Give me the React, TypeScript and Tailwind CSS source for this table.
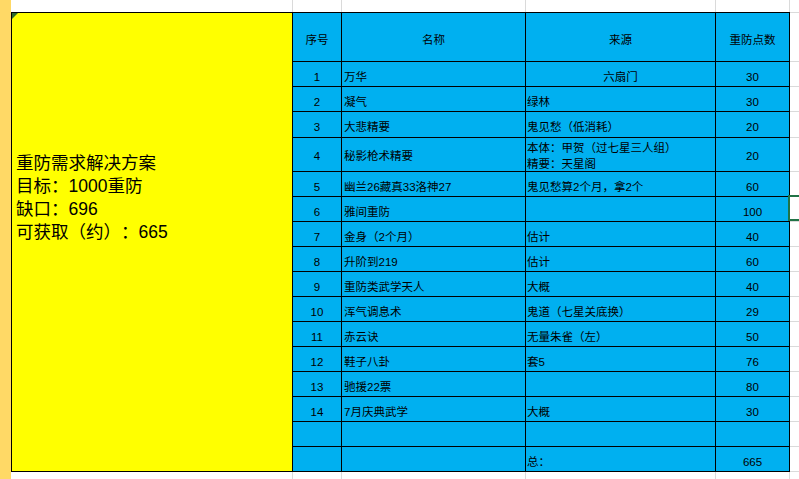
import React from "react";

type Row = { no: string; name: string; src: React.ReactNode; srcCenter?: boolean; pts: string; tall?: boolean };

const rows: Row[] = [
  { no: "1", name: "万华", src: "六扇门", srcCenter: true, pts: "30" },
  { no: "2", name: "凝气", src: "绿林", pts: "30" },
  { no: "3", name: "大悲精要", src: "鬼见愁（低消耗）", pts: "20" },
  {
    no: "4",
    name: "秘影枪术精要",
    src: (
      <div className="leading-[16px]">
        <div>本体：甲贺（过七星三人组）</div>
        <div>精要：天星阁</div>
      </div>
    ),
    pts: "20",
    tall: true,
  },
  { no: "5", name: "幽兰26藏真33洛神27", src: "鬼见愁算2个月，拿2个", pts: "60" },
  { no: "6", name: "雅间重防", src: "", pts: "100" },
  { no: "7", name: "金身（2个月）", src: "估计", pts: "40" },
  { no: "8", name: "升阶到219", src: "估计", pts: "60" },
  { no: "9", name: "重防类武学天人", src: "大概", pts: "40" },
  { no: "10", name: "浑气调息术", src: "鬼道（七星关底换）", pts: "29" },
  { no: "11", name: "赤云诀", src: "无量朱雀（左）", pts: "50" },
  { no: "12", name: "鞋子八卦", src: "套5", pts: "76" },
  { no: "13", name: "驰援22票", src: "", pts: "80" },
  { no: "14", name: "7月庆典武学", src: "大概", pts: "30" },
  { no: "", name: "", src: "", pts: "" },
  { no: "", name: "", src: "总：", pts: "665" },
];

const extraHeights = ["h-[49px]", "h-[25px]", "h-[25px]", "h-[26px]", "h-[34px]"];

function Cell({ children, center, tall, pl }: { children?: React.ReactNode; center?: boolean; tall?: boolean; pl?: string }) {
  return (
    <div
      className={
        "bg-[#00B0F0] flex items-center overflow-hidden whitespace-nowrap " +
        (tall ? "pt-[2px] " : "pt-[5px] ") +
        (center ? "justify-center " : "justify-start ") +
        (pl ?? "")
      }
    >
      {children}
    </div>
  );
}

export default function App() {
  return (
    <div className="w-[799px] h-[479px] bg-white flex overflow-hidden text-black [text-spacing-trim:space-all] font-['Liberation_Sans','Noto_Sans_CJK_SC',sans-serif]">
      {/* left row-header strip */}
      <div className="w-[11px] h-full bg-[#FFD966] shrink-0" />

      {/* main column */}
      <div className="w-[779px] h-full flex flex-col shrink-0">
        <div className="h-[12px] flex shrink-0">
          <div className="w-[282px] border-r border-[#dadada]" />
          <div className="w-[49px] border-r border-[#dadada]" />
          <div className="w-[184px] border-r border-[#dadada]" />
          <div className="w-[190px] border-r border-[#dadada]" />
          <div className="w-[74px] border-r border-[#dadada]" />
        </div>

        <div className="bg-black p-px grid gap-px grid-cols-[280px_48px_183px_189px_73px] grid-rows-[48px_24px_24px_25px_33px_repeat(12,24px)] text-[11.5px] leading-[16px] shrink-0">
          <div className="row-span-17 bg-[#FFFF00] relative flex flex-col pt-[139px] pl-[4px] text-[17.5px] leading-[23px] whitespace-nowrap">
            <svg className="absolute left-0 top-0" width="6" height="6" viewBox="0 0 6 6">
              <polygon points="0,0 6,0 0,6" fill="#2f6b2a" />
            </svg>
            <div>重防需求解决方案</div>
            <div>目标：1000重防</div>
            <div>缺口：696</div>
            <div>可获取（约）：665</div>
          </div>

          <Cell center>序号</Cell>
          <Cell center>名称</Cell>
          <Cell center>来源</Cell>
          <Cell center>重防点数</Cell>

          {rows.map((r, i) => (
            <React.Fragment key={i}>
              <Cell center tall={r.tall}>{r.no}</Cell>
              <Cell tall={r.tall} pl="pl-[2px]">{r.name}</Cell>
              <Cell tall={r.tall} center={r.srcCenter} pl={r.srcCenter ? "" : "pl-[1px]"}>{r.src}</Cell>
              <Cell center tall={r.tall}>{r.pts}</Cell>
            </React.Fragment>
          ))}
        </div>

        <div className="flex-1 flex">
          <div className="w-[282px] border-r border-[#dadada]" />
          <div className="w-[49px] border-r border-[#dadada]" />
          <div className="w-[184px] border-r border-[#dadada]" />
          <div className="w-[190px] border-r border-[#dadada]" />
          <div className="w-[74px] border-r border-[#dadada]" />
        </div>
      </div>

      {/* extra column on the right */}
      <div className="flex-1 h-full flex flex-col">
        <div className="h-[13px] border-b border-[#dadada] shrink-0" />
        {extraHeights.map((h, i) => (
          <div key={"e" + i} className={h + " border-b border-[#dadada] shrink-0"} />
        ))}
        {Array.from({ length: 12 }).map((_, i) => (
          <div key={"f" + i} className="h-[25px] border-b border-[#dadada] shrink-0 relative">
            {i === 1 && (
              <div className="absolute -left-[2px] -top-[2px] -right-[2px] h-[26px] border-2 border-[#217346]" />
            )}
          </div>
        ))}
        <div className="flex-1" />
      </div>
    </div>
  );
}
